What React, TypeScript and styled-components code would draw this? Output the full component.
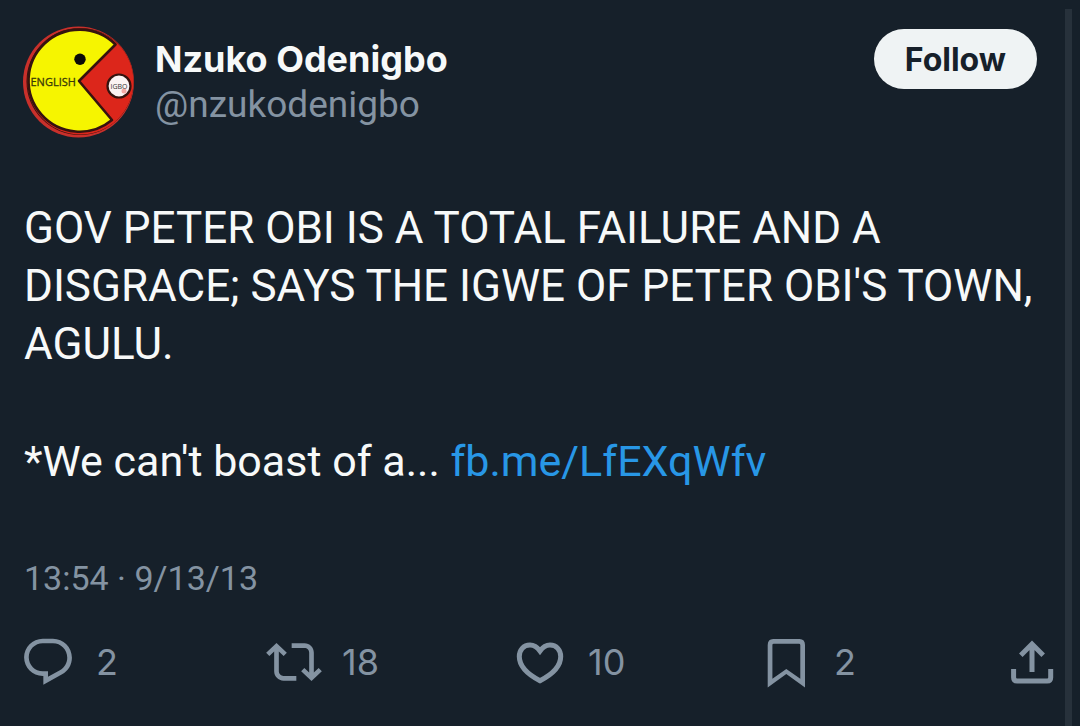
import React from "react";
import styled, { createGlobalStyle } from "styled-components";

const colors = {
  page: "#16202a",
  text: "#f7f9f9",
  muted: "#8493a2",
  link: "#2897e6",
  button: "#eff3f4",
  track: "#27313b",
};

const GlobalStyle = createGlobalStyle`
  *, *::before, *::after { box-sizing: border-box; }
  body {
    margin: 0;
    background: ${colors.page};
    color: ${colors.text};
    font-family: Inter, "Liberation Sans", sans-serif;
  }
`;

const Page = styled.div`
  display: flex;
  min-height: 100vh;
`;

const Post = styled.article`
  flex: 1;
  min-width: 0;
  padding-top: 26px;
`;

const ScrollTrack = styled.div`
  flex: none;
  width: 7px;
  margin: 9px 8px 0 0;
  background: ${colors.track};
`;

const Header = styled.header`
  display: flex;
  align-items: flex-start;
  padding: 0 28px 0 23px;
`;

const Avatar = styled.svg`
  flex: none;
  width: 112px;
  height: 112px;
  margin-right: 20px;
`;

const Author = styled.div`
  flex: 1;
  min-width: 0;
  padding-top: 10px;
`;

const Name = styled.h1`
  margin: 0;
  font-size: 36px;
  line-height: 46px;
  font-weight: 700;
`;

const Handle = styled.p`
  margin: 0;
  font-family: Roboto, sans-serif;
  font-size: 37px;
  line-height: 46px;
  color: ${colors.muted};
`;

const FollowButton = styled.button`
  flex: none;
  margin-top: 3px;
  height: 60px;
  padding: 0 31px;
  border: 0;
  border-radius: 30px;
  background: ${colors.button};
  color: ${colors.page};
  font: inherit;
  font-size: 32px;
  font-weight: 700;
  cursor: pointer;
`;

const Body = styled.div`
  padding: 61px 24px 0;
  font-family: Roboto, sans-serif;
`;

const Paragraph = styled.p<{ $size: number }>`
  margin: 0 0 59px;
  font-size: ${({ $size }) => $size}px;
  line-height: 58px;
`;

const Link = styled.a`
  color: ${colors.link};
  text-decoration: none;
`;

const Timestamp = styled.time`
  display: block;
  padding: 0 24px;
  font-family: Roboto, sans-serif;
  font-size: 34px;
  line-height: 58px;
  color: ${colors.muted};
`;

const Actions = styled.div`
  display: grid;
  grid-template-columns: repeat(4, 1fr) auto;
  padding: 27px 5px 34px 20px;
`;

const Action = styled.button`
  display: flex;
  align-items: center;
  gap: 20px;
  padding: 0;
  border: 0;
  background: none;
  color: ${colors.muted};
  font: inherit;
  font-size: 36px;
  line-height: 56px;
  cursor: pointer;
`;

const Icon = styled.svg`
  flex: none;
  width: 56px;
  height: 56px;
  fill: currentColor;
`;

const StrokeIcon = styled(Icon)`
  fill: none;
  stroke: currentColor;
  stroke-width: 5;
`;

const ReplyIcon = () => (
  <Icon viewBox="0 0 24 24" aria-hidden="true">
    <path d="M1.751 10c0-4.42 3.584-8 8.005-8h4.366c4.49 0 8.129 3.64 8.129 8.13 0 2.96-1.607 5.68-4.196 7.11l-8.054 4.46v-3.69h-.067c-4.49.1-8.183-3.51-8.183-8.01zm8.005-6c-3.317 0-6.005 2.69-6.005 6 0 3.37 2.77 6.08 6.138 6.01l.351-.01h1.761v2.3l5.087-2.81c1.951-1.08 3.163-3.13 3.163-5.36 0-3.39-2.744-6.13-6.129-6.13H9.756z" />
  </Icon>
);

const RepostIcon = () => (
  <Icon viewBox="0 0 24 24" aria-hidden="true">
    <path d="M4.5 3.88l4.432 4.14-1.364 1.46L5.5 7.55V16c0 1.1.896 2 2 2H13v2H7.5c-2.209 0-4-1.79-4-4V7.55L1.432 9.48.068 8.02 4.5 3.88zM16.5 6H11V4h5.5c2.209 0 4 1.79 4 4v8.45l2.068-1.93 1.364 1.46-4.432 4.14-4.432-4.14 1.364-1.46 2.068 1.93V8c0-1.1-.896-2-2-2z" />
  </Icon>
);

const LikeIcon = () => (
  <StrokeIcon viewBox="0 0 56 56" aria-hidden="true">
    <path d="M28 17C25.5 13.500 22 11 18 11C11.500 11 7.300 16 7.300 22.500C7.300 31.500 15 40 28 46.700C41 40 48.700 31.500 48.700 22.500C48.700 16 44.500 11 38 11C34 11 30.500 13.500 28 17Z" />
  </StrokeIcon>
);

const BookmarkIcon = () => (
  <Icon viewBox="0 0 56 56" aria-hidden="true">
    <path
      fillRule="evenodd"
      d="M9.700 53.500V11Q9.700 5 15.200 5H41.500Q47 5 47 11V53.500L28.300 40ZM14.400 44.800L28.300 35L42.300 44.800V11Q42.300 9.700 41 9.700H15.700Q14.400 9.700 14.400 11Z"
    />
  </Icon>
);

const ShareIcon = () => (
  <StrokeIcon viewBox="0 0 56 56" aria-hidden="true">
    <path d="M28 38V10M16.800 21.200L28 10L39.200 21.200M9.600 35V43.500Q9.600 47 13.100 47H43.200Q46.700 47 46.700 43.500V35" />
  </StrokeIcon>
);

const App = () => (
  <>
    <GlobalStyle />
    <Page>
      <Post>
        <Header>
          <Avatar viewBox="0 0 112 112" role="img" aria-label="Profile picture">
            <circle cx="55.500" cy="56" r="55.500" fill="#c9302b" />
            <circle cx="57" cy="55.500" r="53.500" fill="#35130f" />
            <circle cx="57.500" cy="55.500" r="53" fill="#dc261b" />
            <path
              d="M56 55L92.500 18.500A51 51 0 1 0 89 94Z"
              fill="#f6f500"
              stroke="#35130f"
              strokeWidth="2.600"
              strokeLinejoin="round"
            />
            <circle cx="57" cy="33.300" r="5.700" fill="#0c0a08" />
            <circle cx="96" cy="60" r="11.500" fill="#fbf3f3" stroke="#35130f" strokeWidth="2.200" />
            <circle cx="101" cy="65" r="2.500" fill="#f3aaa6" />
            <text x="7.500" y="60" fontFamily="'Open Sans', sans-serif" fontSize="11" fill="#3a3a08" stroke="#3a3a08" strokeWidth="0.300">
              ENGLISH
            </text>
            <text x="96" y="62.500" textAnchor="middle" fontFamily="'Open Sans', sans-serif" fontSize="7" fill="#333">
              IGBO
            </text>
          </Avatar>
          <Author>
            <Name>Nzuko Odenigbo</Name>
            <Handle>@nzukodenigbo</Handle>
          </Author>
          <FollowButton type="button">Follow</FollowButton>
        </Header>
        <Body>
          <Paragraph $size={44}>
            GOV PETER OBI IS A TOTAL FAILURE AND A DISGRACE; SAYS THE IGWE OF PETER OBI'S TOWN, AGULU.
          </Paragraph>
          <Paragraph $size={43}>
            *We can't boast of a... <Link href="https://fb.me/LfEXqWfv">fb.me/LfEXqWfv</Link>
          </Paragraph>
        </Body>
        <Timestamp dateTime="2013-09-13T13:54">13:54 · 9/13/13</Timestamp>
        <Actions>
          <Action type="button" aria-label="Reply, 2"><ReplyIcon />2</Action>
          <Action type="button" aria-label="Repost, 18"><RepostIcon />18</Action>
          <Action type="button" aria-label="Like, 10"><LikeIcon />10</Action>
          <Action type="button" aria-label="Bookmark, 2"><BookmarkIcon />2</Action>
          <Action type="button" aria-label="Share"><ShareIcon /></Action>
        </Actions>
      </Post>
      <ScrollTrack />
    </Page>
  </>
);

export default App;
